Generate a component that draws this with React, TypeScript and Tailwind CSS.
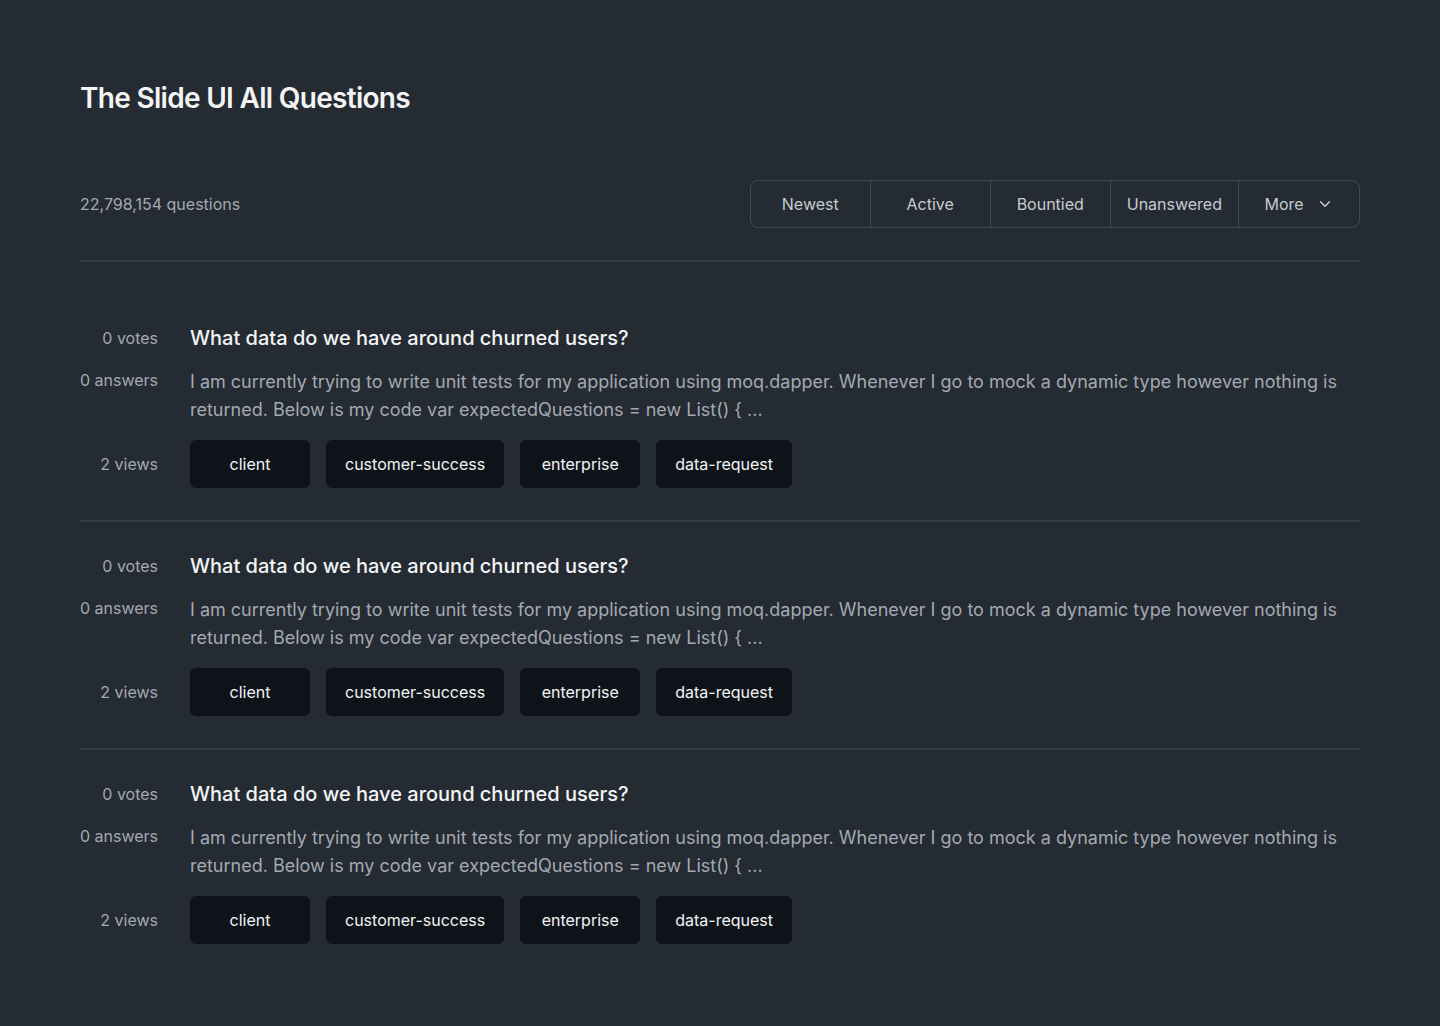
import { ChevronDown } from 'lucide-react';

const filters = ['Newest', 'Active', 'Bountied', 'Unanswered'];
const tags = ['client', 'customer-success', 'enterprise', 'data-request'];

function Question({ last }: { last?: boolean }) {
  return (
    <div
      className={`grid grid-cols-[78px_1fr] gap-x-8 gap-y-4 py-8 ${last ? '' : 'border-b-2 border-[#343b44]'}`}
    >
      <div className="flex items-center justify-end whitespace-nowrap text-base leading-6 text-[#a3a9b0]">0 votes</div>
      <h2 className="text-xl leading-6 font-medium text-[#f3f4f6]">What data do we have around churned users?</h2>
      <div className="mt-[2px] flex justify-end whitespace-nowrap text-base leading-6 text-[#a3a9b0]">0 answers</div>
      <p className="mt-[2px] text-lg leading-7 text-[#a3a9b0]">
        I am currently trying to write unit tests for my application using moq.dapper. Whenever I go to mock a dynamic type however nothing is returned. Below is my code var expectedQuestions = new List() &#123; ...
      </p>
      <div className="flex items-center justify-end whitespace-nowrap text-base leading-6 text-[#a3a9b0]">2 views</div>
      <div className="flex gap-4">
        {tags.map((t) => (
          <span
            key={t}
            className="flex h-12 min-w-[120px] items-center justify-center rounded-md bg-[#0e131a] px-[19px] text-base text-[#f3f4f6]"
          >
            {t}
          </span>
        ))}
      </div>
    </div>
  );
}

export default function App() {
  return (
    <div className="min-h-[1026px] bg-[#252b33] px-20 pt-20 font-['Inter','Liberation_Sans',sans-serif]">
      <h1 className="text-[28px] leading-9 font-semibold tracking-[-0.025em] text-[#f4f4f5]">The Slide UI All Questions</h1>

      <div className="mt-16 flex items-center justify-between border-b-2 border-[#343b44] pb-8">
        <span className="text-base text-[#a3a9b0]">22,798,154 questions</span>
        <div className="flex h-12 overflow-hidden rounded-lg border border-[#434a54]">
          {filters.map((f) => (
            <button
              key={f}
              className="flex min-w-[120px] items-center justify-center border-r border-[#434a54] px-4 text-base text-[#c5cad0]"
            >
              {f}
            </button>
          ))}
          <button className="flex w-[120px] items-center justify-center gap-3 text-base text-[#c5cad0]">
            More
            <ChevronDown size={18} strokeWidth={2} />
          </button>
        </div>
      </div>

      <div className="pt-8">
        <Question />
        <Question />
        <Question last />
      </div>
    </div>
  );
}
